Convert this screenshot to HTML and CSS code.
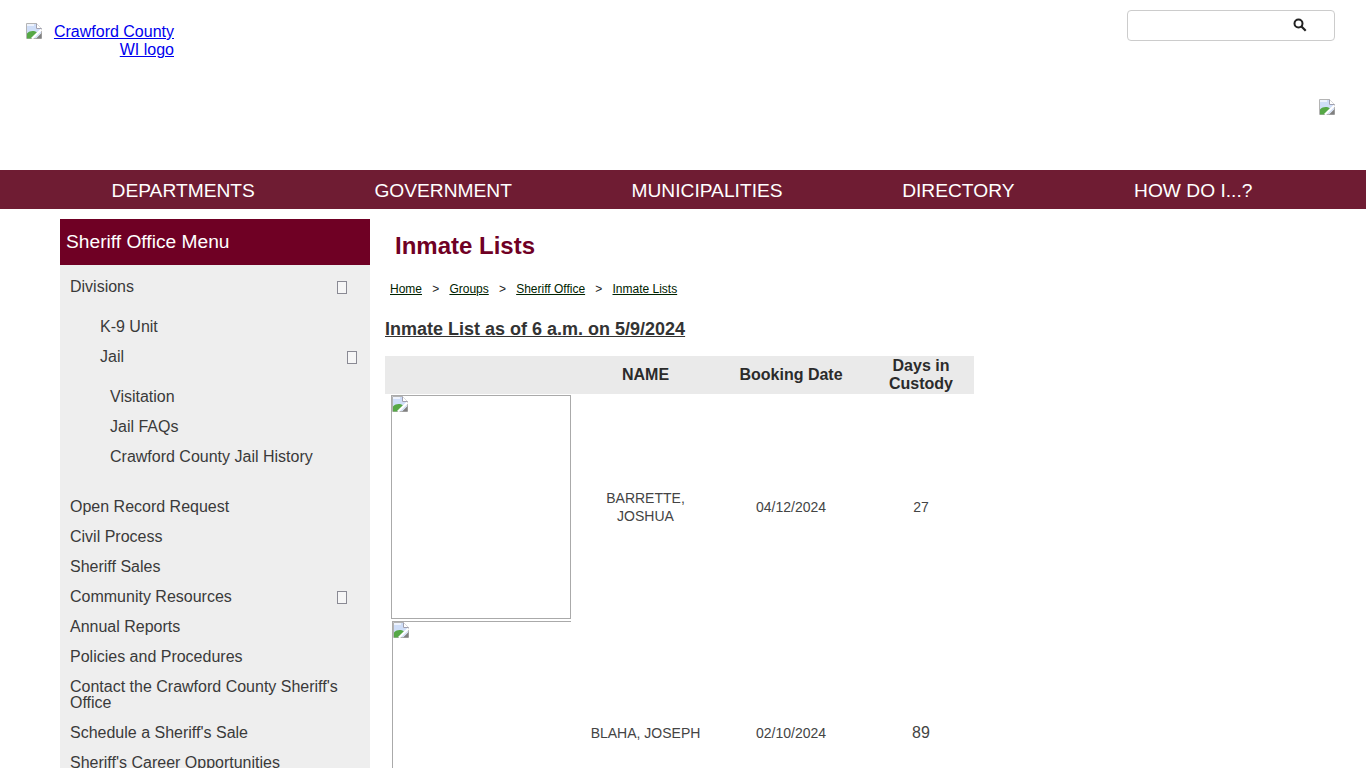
FILE: index.html
```html
<!DOCTYPE html>
<html lang="en">
<head>
<meta charset="utf-8">
<title>Inmate Lists</title>
<link rel="stylesheet" href="styles.css">
</head>
<body>
<svg class="defs" width="0" height="0" aria-hidden="true">
  <symbol id="broken" viewBox="0 0 16 16">
    <path d="M.5.5H10.500L15.500 5.500V15.500H.5Z" fill="#fff" stroke="#b4b4b4"/>
    <path d="M1 1H10V6H15V10L10 15H1Z" fill="#cfdef8"/>
    <path d="M1 1H8V3H1Z" fill="#eef3fd"/>
    <path d="M1 15.500V10.500C4 7.500 8 7.500 11 9.500L5 15.500Z" fill="#56a846"/>
    <path d="M10 15.500L15.500 10V15.500Z" fill="#808080"/>
    <path d="M6 15.500L15.500 6.500" stroke="#fff" stroke-width="2.200"/>
    <path d="M10.500.5V5.500H15.500" fill="#fff" stroke="#a0a0b0"/>
  </symbol>
</svg>
<header class="site-header">
  <a class="logo" href="#"><svg class="broken"><use href="#broken"/></svg><span class="logo-alt">Crawford County WI logo</span></a>
  <div class="header-right">
    <div class="search">
      <svg class="search-icon" viewBox="0 0 14 14"><circle cx="5.500" cy="5.500" r="4" fill="none" stroke="#222" stroke-width="2"/><path d="M8.500 8.500L12.700 12.700" stroke="#222" stroke-width="2.200"/></svg>
    </div>
    <svg class="broken"><use href="#broken"/></svg>
  </div>
</header>
<nav class="main-nav">
  <a href="#">DEPARTMENTS</a>
  <a href="#">GOVERNMENT</a>
  <a href="#">MUNICIPALITIES</a>
  <a href="#">DIRECTORY</a>
  <a href="#">HOW DO I...?</a>
</nav>
<div class="page">
  <aside class="sidebar">
    <h2 class="side-title">Sheriff Office Menu</h2>
    <ul class="menu">
      <li><div class="item">Divisions<i class="box"></i></div>
        <ul class="sub">
          <li><div class="item">K-9 Unit</div></li>
          <li><div class="item toggled-sub">Jail<i class="box"></i></div>
            <ul class="sub nested">
              <li><div class="item">Visitation</div></li>
              <li><div class="item">Jail FAQs</div></li>
              <li><div class="item">Crawford County Jail History</div></li>
            </ul>
          </li>
        </ul>
      </li>
      <li><div class="item">Open Record Request</div></li>
      <li><div class="item">Civil Process</div></li>
      <li><div class="item">Sheriff Sales</div></li>
      <li><div class="item">Community Resources<i class="box"></i></div></li>
      <li><div class="item">Annual Reports</div></li>
      <li><div class="item">Policies and Procedures</div></li>
      <li><div class="item">Contact the Crawford County Sheriff's Office</div></li>
      <li><div class="item">Schedule a Sheriff's Sale</div></li>
      <li><div class="item">Sheriff's Career Opportunities</div></li>
    </ul>
  </aside>
  <main class="content">
    <h1 class="page-title">Inmate Lists</h1>
    <div class="crumbs"><a href="#">Home</a><span>&gt;</span><a href="#">Groups</a><span>&gt;</span><a href="#">Sheriff Office</a><span>&gt;</span><a href="#">Inmate Lists</a></div>
    <h3 class="list-title">Inmate List as of 6 a.m. on 5/9/2024</h3>
    <table class="inmates">
      <colgroup><col class="c-photo"><col class="c-name"><col class="c-date"><col class="c-days"></colgroup>
      <thead><tr><th></th><th>NAME</th><th>Booking Date</th><th>Days in Custody</th></tr></thead>
      <tbody>
        <tr class="row-one"><td class="photo-cell"><div class="photo"><svg class="broken"><use href="#broken"/></svg></div></td><td>BARRETTE, JOSHUA</td><td>04/12/2024</td><td>27</td></tr>
        <tr class="row-two"><td class="photo-cell"><div class="photo photo-two"><svg class="broken"><use href="#broken"/></svg></div></td><td>BLAHA, JOSEPH</td><td>02/10/2024</td><td class="big">89</td></tr>
      </tbody>
    </table>
  </main>
</div>
</body>
</html>
```
FILE: styles.css
```css
html, body {
  margin: 0;
  height: 768px;
  overflow: hidden;
  background: #fff;
  font-family: "Liberation Sans", Arial, sans-serif;
}
.defs { display: block; height: 0; }
.broken { display: block; width: 16px; height: 16px; }

.site-header {
  height: 170px;
  display: flex;
  justify-content: space-between;
  align-items: flex-start;
}
.logo {
  display: flex;
  align-items: flex-start;
  width: 148px;
  margin: 23px 0 0 26px;
  color: #0000ee;
  font-size: 16px;
  line-height: 18px;
  text-align: right;
}
.logo .broken { flex: none; }
.logo-alt { flex: 1; padding-left: 8px; }
.header-right {
  display: flex;
  flex-direction: column;
  align-items: flex-end;
  margin: 10px 31px 0 0;
  gap: 58px;
}
.search {
  box-sizing: border-box;
  width: 208px;
  height: 31px;
  border: 1px solid #ccc;
  border-radius: 4px;
  padding: 7px 0 0 165px;
  background: #fff;
}
.search-icon { display: block; width: 14px; height: 14px; }

.main-nav {
  box-sizing: border-box;
  height: 39px;
  background: #6f1c33;
  display: flex;
  gap: 119.6px;
  padding: 2px 0 0 111.6px;
  align-items: center;
}
.main-nav a {
  color: #fff;
  text-decoration: none;
  font-size: 19.2px;
}

.page {
  display: flex;
  padding: 10px 0 0 60px;
}
.sidebar {
  width: 310px;
  flex: none;
  background: #eee;
  height: 560px;
}
.side-title {
  margin: 0;
  height: 45px;
  padding-top: 1px;
  line-height: 43px;
  padding-left: 6px;
  font-size: 19.2px;
  font-weight: 400;
  color: #fff;
  background: #6f0024;
}
.menu, .sub {
  list-style: none;
  margin: 0;
  padding: 0;
}
.menu { padding-top: 7px; }
.sub { padding: 10px 0; }
.item {
  display: flex;
  justify-content: space-between;
  padding: 7px 23px 7px 10px;
  font-size: 16px;
  line-height: 16px;
  color: #3a3a3a;
}
.sub .item { padding-left: 40px; }
.sub .toggled-sub { padding-right: 13px; }
.sub.nested .item { padding-left: 50px; }
.box {
  flex: none;
  box-sizing: border-box;
  width: 10px;
  height: 13px;
  margin-top: 2px;
  border: 1px solid #8a8a94;
  background: #f6f6f6;
}

.content {
  padding-left: 15px;
  flex: 1;
}
.page-title {
  margin: 13px 0 0 10px;
  font-size: 24px;
  line-height: 28px;
  font-weight: 700;
  color: #6f0024;
}
.crumbs {
  display: flex;
  margin: 22px 0 0 5px;
  font-size: 12px;
  line-height: 14px;
  color: #222;
}
.crumbs a { color: #002200; }
.crumbs span { margin: 0 10.2px; }
.list-title {
  margin: 22px 0 0;
  font-size: 18px;
  line-height: 22px;
  font-weight: 700;
  color: #333;
  text-decoration: underline;
}
.inmates {
  margin-top: 16px;
  width: 589px;
  table-layout: fixed;
  border-collapse: collapse;
  color: #444;
  font-size: 14px;
  line-height: 18px;
  text-align: center;
}
.c-photo { width: 188px; }
.c-name { width: 145px; }
.c-date { width: 146px; }
.c-days { width: 110px; }
.inmates th {
  height: 38px;
  padding: 0 10px;
  box-sizing: border-box;
  background: #eaeaea;
  color: #2b2b2b;
  font-size: 16px;
  font-weight: 700;
}
.inmates td { padding: 0 10px; }
.inmates th:last-child, .inmates td:last-child { padding-left: 14px; }
.inmates .photo-cell { padding: 1px 0 0 6px; vertical-align: top; text-align: left; }
.photo {
  box-sizing: border-box;
  width: 180px;
  height: 224px;
  border: 1px solid #aaa;
}
.inmates .row-two .photo-cell { padding: 2px 0 0 7px; }
.photo-two { width: 179px; height: 226px; border-right: 0; }
.inmates td.big { font-size: 16px; }
```
